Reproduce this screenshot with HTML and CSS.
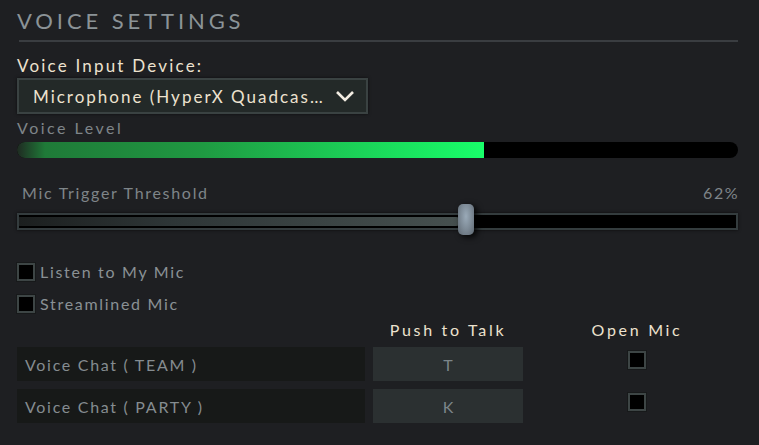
FILE: index.html
```html
<!DOCTYPE html>
<html>
<head>
<meta charset="utf-8">
<link rel="stylesheet" href="styles.css">
</head>
<body>
<div class="panel">
  <h1 class="title">VOICE SETTINGS</h1>
  <div class="divider"></div>
  <div class="field-label">Voice Input Device:</div>
  <div class="dropdown">
    <span class="dropdown-text">Microphone (HyperX Quadcas…</span>
    <svg class="chevron" width="20" height="12" viewBox="0 0 20 12"><path d="M2 2 L10 10 L18 2" fill="none" stroke="#f2ece2" stroke-width="2.6"/></svg>
  </div>
  <div class="sub-label">Voice Level</div>
  <div class="level-bar"><div class="level-fill" style="width:64.8%"></div></div>
  <div class="threshold-head">
    <span>Mic Trigger Threshold</span>
    <span class="pct">62%</span>
  </div>
  <div class="slider">
    <div class="slider-track">
      <div class="slider-fill" style="width:61.5%"></div>
    </div>
    <div class="slider-thumb" style="left:441px"></div>
  </div>
  <div class="checks">
    <label class="check"><span class="box"></span><span>Listen to My Mic</span></label>
    <label class="check"><span class="box"></span><span>Streamlined Mic</span></label>
  </div>
  <div class="binds">
    <div></div>
    <div class="col-head">Push to Talk</div>
    <div class="col-head">Open Mic</div>
    <div class="bind-name">Voice Chat ( TEAM )</div>
    <div class="bind-key">T</div>
    <div class="bind-open"><span class="box"></span></div>
    <div class="bind-name">Voice Chat ( PARTY )</div>
    <div class="bind-key">K</div>
    <div class="bind-open"><span class="box"></span></div>
  </div>
</div>
</body>
</html>
```
FILE: styles.css
```css
html, body {
  margin: 0;
  padding: 0;
  background: #1e1f22;
}
body {
  font-family: Lato, "Open Sans", sans-serif;
  width: 759px;
  height: 445px;
  overflow: hidden;
}
.panel {
  padding: 7px 21px 0 17px;
}
.title {
  margin: 0;
  font-size: 22px;
  font-weight: 400;
  letter-spacing: 3.9px;
  color: #8b9397;
  line-height: 28px;
}
.divider {
  height: 2px;
  background: #3a3d41;
  margin: 5px 0 0 2px;
}
.field-label {
  margin-top: 14px;
  font-size: 17px;
  letter-spacing: 2.2px;
  color: #ede2cf;
  line-height: 19px;
}
.dropdown {
  margin-top: 3px;
  height: 32px;
  box-sizing: content-box;
  border: 2px solid #3a4242;
  background: #232928;
  display: flex;
  align-items: center;
  justify-content: space-between;
  padding: 0 11px 0 0;
  width: 336px;
  box-shadow: 0 0 3px rgba(0,0,0,0.6);
}
.dropdown-text {
  padding-left: 14px;
  font-size: 17px;
  letter-spacing: 2px;
  color: #ede2cf;
  white-space: nowrap;
}
.sub-label {
  margin-top: 5px;
  font-size: 16px;
  letter-spacing: 2.5px;
  color: #7e8589;
  line-height: 18px;
}
.level-bar {
  margin-top: 5px;
  height: 16px;
  border-radius: 8px;
  background: #000;
  overflow: hidden;
}
.level-fill {
  height: 100%;
  background: linear-gradient(90deg, #1f2a22 0%, #1f7a38 6%, #1f9a42 40%, #18ff6a 100%);
}
.threshold-head {
  margin-top: 26px;
  padding-left: 5px;
  display: flex;
  justify-content: space-between;
  font-size: 16px;
  letter-spacing: 1.7px;
  color: #7e8589;
  line-height: 18px;
}
.pct {
  letter-spacing: 1.5px;
  margin-right: -1px;
}
.slider {
  position: relative;
  margin-top: 9px;
  height: 24px;
}
.slider-track {
  position: absolute;
  left: 0;
  right: 0;
  top: 2px;
  height: 13px;
  border: 2px solid #343c3e;
  background: #000;
  box-shadow: 0 0 3px rgba(0,0,0,0.7);
}
.slider-fill {
  height: 9px;
  margin-top: 2px;
  border-radius: 0 4px 4px 0;
  background: linear-gradient(90deg, #1c1f1f 0%, #2e3637 35%, #46504f 100%);
}
.slider-thumb {
  position: absolute;
  top: -7px;
  width: 16px;
  height: 31px;
  border-radius: 5px;
  background: radial-gradient(ellipse at 50% 40%, #9aaab8 0%, #7d8a96 50%, #5d6770 100%);
  box-shadow: 3px 2px 6px rgba(0,0,0,0.9);
}
.checks {
  margin-top: 27px;
  display: flex;
  flex-direction: column;
  gap: 12px;
}
.check {
  display: flex;
  align-items: center;
  gap: 5px;
  font-size: 16px;
  letter-spacing: 1.7px;
  color: #8a9195;
  line-height: 20px;
}
.box {
  display: inline-block;
  width: 14px;
  height: 14px;
  border: 2px solid #3d4545;
  background: #000;
  box-shadow: 0 0 0 1px #17191a;
}
.binds {
  margin-top: 6px;
  display: grid;
  grid-template-columns: 348px 150px 212px;
  grid-template-rows: 19px 34px 34px;
  column-gap: 8px;
  row-gap: 8px;
}
.col-head {
  text-align: center;
  font-size: 16px;
  letter-spacing: 2.7px;
  color: #ede2cf;
  line-height: 19px;
}
.bind-name {
  background: #171918;
  color: #858c90;
  font-size: 16px;
  letter-spacing: 1.7px;
  display: flex;
  align-items: center;
  padding-left: 8px;
}
.bind-key {
  background: #2b3031;
  color: #7c868a;
  font-size: 16px;
  display: flex;
  align-items: center;
  justify-content: center;
}
.bind-open {
  display: flex;
  justify-content: center;
  align-items: flex-start;
  padding-top: 4px;
}
```
